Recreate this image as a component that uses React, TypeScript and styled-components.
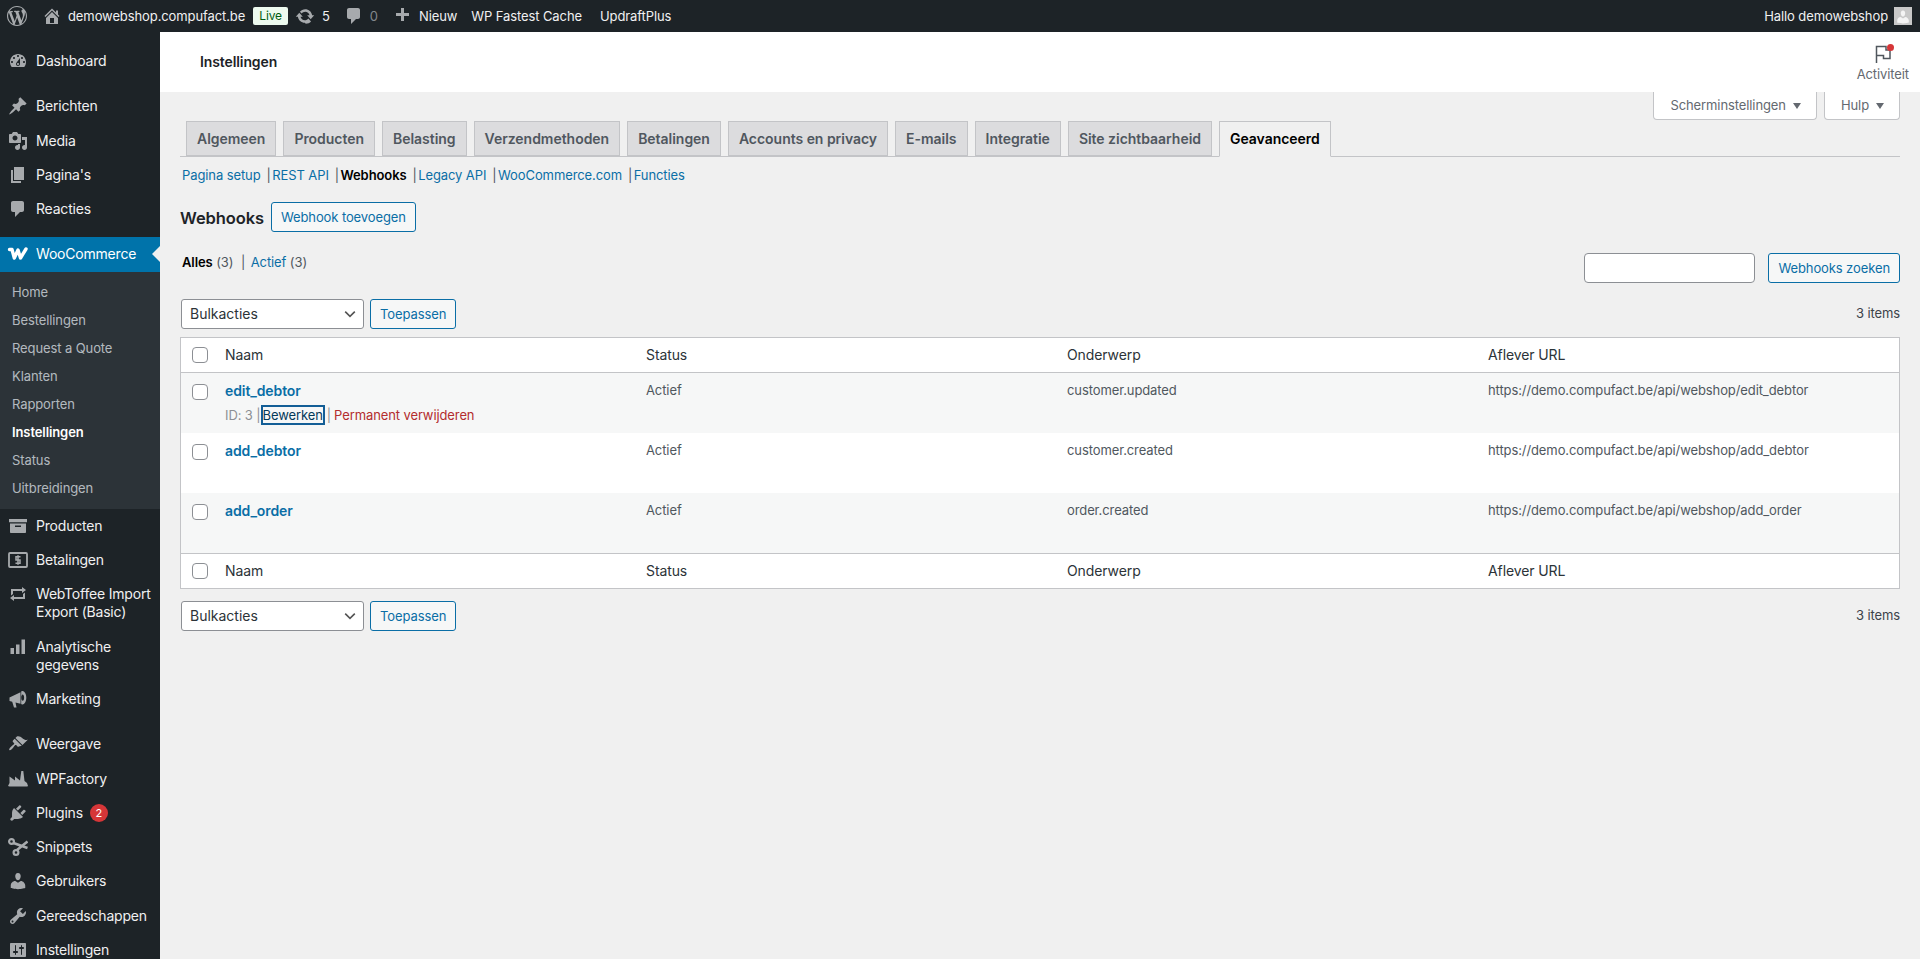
import React from 'react'
import styled, { createGlobalStyle } from 'styled-components'

const ICONS: Record<string, string> = {
  wp: 'M20 10c0-5.51-4.49-10-10-10C4.48 0 0 4.49 0 10c0 5.52 4.48 10 10 10 5.51 0 10-4.48 10-10zM7.78 15.37L4.37 6.22c.55-.02 1.17-.08 1.17-.08.5-.06.44-1.13-.06-1.11 0 0-1.45.11-2.37.11-.18 0-.37 0-.58-.01C4.12 2.69 6.87 1.07 10 1.07c2.33 0 4.45.87 6.05 2.34-.68-.11-1.65.39-1.65 1.58 0 .74.45 1.36.9 2.1.35.61.55 1.36.55 2.46 0 1.49-1.4 5-1.4 5l-3.03-8.37c.54-.02.82-.17.82-.17.5-.05.44-1.25-.06-1.22 0 0-1.44.12-2.38.12-.87 0-2.33-.12-2.33-.12-.5-.03-.56 1.2-.06 1.22l.92.08 1.26 3.41zM17.41 10c.24-.64.74-1.87.43-4.25.7 1.29 1.05 2.71 1.05 4.25 0 3.29-1.73 6.24-4.4 7.78.97-2.59 1.94-5.2 2.92-7.78zM6.1 18.09C3.12 16.65 1.11 13.53 1.11 10c0-1.3.23-2.48.72-3.58C3.25 10.3 4.67 14.19 6.1 18.09zm4.03-6.63l2.58 6.98c-.86.29-1.76.45-2.71.45-.79 0-1.57-.11-2.29-.33.81-2.38 1.62-4.74 2.42-7.1z',
  home: 'M16 8.5l1.53 1.53-1.06 1.06L10 4.62l-6.47 6.47-1.06-1.06L10 2.5l4 4v-2h2v4zm-6-2.46l6 5.99V18H4v-5.97zM12 17v-5H8v5h4z',
  update: 'M10.2 3.28c3.53 0 6.43 2.61 6.92 6h2.08l-3.5 4-3.5-4h2.32c-.45-1.97-2.21-3.45-4.32-3.45-1.45 0-2.73.71-3.54 1.78L4.95 5.66C6.23 4.2 8.11 3.28 10.2 3.28zm-.4 13.44c-3.52 0-6.43-2.61-6.92-6H.8l3.5-4c1.17 1.33 2.33 2.67 3.5 4H5.48c.45 1.97 2.21 3.45 4.32 3.45 1.45 0 2.73-.71 3.54-1.78l2.71 3.06c-1.28 1.46-3.16 2.27-5.25 2.27z',
  comment: 'M5 2h9c1.1 0 2 .9 2 2v7c0 1.1-.9 2-2 2h-2l-5 5v-5H5c-1.1 0-2-.9-2-2V4c0-1.1.9-2 2-2z',
  plus: 'M17 7v3h-5v5H9v-5H4V7h5V2h3v5h5z',
  dashboard: 'M3.76 16h12.48c1.1-1.37 1.76-3.11 1.76-5 0-4.42-3.58-8-8-8s-8 3.58-8 8c0 1.89.66 3.63 1.76 5zM10 4c.55 0 1 .45 1 1s-.45 1-1 1-1-.45-1-1 .45-1 1-1zM6 6c.55 0 1 .45 1 1s-.45 1-1 1-1-.45-1-1 .45-1 1-1zm8 0c.55 0 1 .45 1 1s-.45 1-1 1-1-.45-1-1 .45-1 1-1zm-5.37 5.55L12 7v6c0 1.1-.9 2-2 2s-2-.9-2-2c0-.57.24-1.08.63-1.45zM4 10c.55 0 1 .45 1 1s-.45 1-1 1-1-.45-1-1 .45-1 1-1zm12 0c.55 0 1 .45 1 1s-.45 1-1 1-1-.45-1-1 .45-1 1-1zm-5 3c0-.55-.45-1-1-1s-1 .45-1 1 .45 1 1 1 1-.45 1-1z',
  pin: 'M10.44 3.02l1.82-1.82 6.36 6.35-1.83 1.82c-1.05-.68-2.48-.57-3.41.36l-.75.75c-.92.93-1.04 2.35-.35 3.41l-1.83 1.82-2.41-2.41-2.8 2.79c-.42.42-3.38 2.71-3.8 2.29s1.86-3.39 2.28-3.81l2.79-2.79L4.1 9.36l1.83-1.82c1.05.69 2.48.57 3.4-.36l.75-.75c.93-.92 1.05-2.35.36-3.41z',
  media: 'M13 11V4c0-.55-.45-1-1-1h-1.67L9 1H5L3.67 3H2c-.55 0-1 .45-1 1v7c0 .55.45 1 1 1h10c.55 0 1-.45 1-1zM7 4.5c1.38 0 2.5 1.12 2.5 2.5S8.38 9.5 7 9.5 4.5 8.38 4.5 7 5.62 4.5 7 4.5zM14 6h5v10.5c0 1.38-1.12 2.5-2.5 2.5S14 17.88 14 16.5s1.12-2.5 2.5-2.5c.17 0 .34.02.5.05V9h-3V6zm-4 8.05V13h2v3.5c0 1.38-1.12 2.5-2.5 2.5S7 17.88 7 16.5 8.12 14 9.5 14c.17 0 .34.02.5.05z',
  page: 'M6 15V2h10v13H6zm-1 1h8v2H3V5h2v11z',
  archive: 'M19 3v3.2H1V3h18zM2 7.5h16V16c0 .55-.45 1-1 1H3c-.55 0-1-.45-1-1V7.5zm11 2H7V11h6V9.5z',
  repeat: 'M5 7v3l-2 1.5V5h11V3l4 3.01L14 9V7H5zm10 6v-3l2-1.5V15H6v2l-4-3.01L6 11v2h9z',
  bars: 'M2.5 11H6v6H2.5v-6zM8 7.5h3.5V17H8V7.5zM13.5 2.5H17V17h-3.5V2.5z',
  megaphone: 'M1.5 8.5l11-5.3v11.5l-5-1.3 1 5H6l-1.8-5.6-2.7-.8V8.5zM14.5 2c2 0 3.8 3 3.8 6.7s-1.8 6.7-3.8 6.7c-.8 0-1.3-.5-1.3-.5V2.5s.5-.5 1.3-.5zm.2 3.6c-.8 0-1.3 1.3-1.3 3.1s.5 3.1 1.3 3.1 1.4-1.3 1.4-3.1-.6-3.1-1.4-3.1z',
  brush: 'M14.48 11.06L7.41 3.99l1.5-1.5c.5-.56 2.3-.47 3.51.32 1.21.8 1.43 1.28 2.91 2.1 1.18.64 2.45 1.26 4.45.85zm-.71.71L6.7 4.7 4.93 6.47c-.39.39-.39 1.02 0 1.41l1.06 1.06c.39.39.39 1.03 0 1.42-.6.6-1.43 1.11-2.21 1.69-.35.26-.7.53-1.01.84-1.06 1.06-2.2 2.3-1.41 3.11.79.78 2.02-.36 3.1-1.43.3-.31.58-.66.84-1.01.58-.78 1.09-1.61 1.69-2.21.39-.39 1.03-.39 1.42 0l1.06 1.06c.39.39 1.02.39 1.41 0z',
  factory: 'M0 17l1.5-3V7.5l5.5 4v-4l5 4L13.3 2h2l1.2 10 2.5 2 1 3c-.5.5-1 .5-1.5.5h-17C1 17.5.4 17.3 0 17z',
  plug: 'M13.11 4.36L9.87 7.6 8 5.73l3.24-3.24c.35-.34 1.05-.2 1.56.32.52.51.66 1.21.31 1.55zm-8 1.77l.91-1.12 9.01 9.01-1.19.84c-.71.71-2.63 1.16-3.82 1.16H6.14L4.9 17.26c-.59.59-1.54.59-2.12 0-.59-.58-.59-1.53 0-2.12l1.24-1.24v-3.88c0-1.13.4-3.19 1.09-3.89zm7.26 3.97l3.24-3.24c.34-.35 1.04-.21 1.55.31.52.51.66 1.21.31 1.55l-3.24 3.25z',
  users: 'M10 9.25c-2.27 0-2.73-3.44-2.73-3.44C7 4.02 7.82 2 9.97 2c2.16 0 2.98 2.02 2.71 3.81 0 0-.41 3.44-2.68 3.44zm0 2.57L12.72 10c2.39 0 4.52 2.33 4.52 4.53v2.49s-3.65 1.13-7.24 1.13c-3.65 0-7.24-1.13-7.24-1.13v-2.49c0-2.25 1.94-4.48 4.47-4.48z',
  tools: 'M16.68 9.77c-1.34 1.34-3.3 1.67-4.95.99l-5.41 6.52c-.99.99-2.59.99-3.58 0s-.99-2.59 0-3.57l6.52-5.42c-.68-1.65-.35-3.61.99-4.95 1.28-1.28 3.12-1.62 4.72-1.06l-2.89 2.89 2.82 2.82 2.86-2.87c.53 1.58.18 3.39-1.08 4.65zM3.81 16.21c.4.39 1.04.39 1.43 0 .4-.4.4-1.04 0-1.43-.39-.4-1.03-.4-1.43 0-.39.39-.39 1.03 0 1.43z',
  settings: 'M18 16V4c0-.55-.45-1-1-1H3c-.55 0-1 .45-1 1v12c0 .55.45 1 1 1h14c.55 0 1-.45 1-1zM8 11h1c.55 0 1 .45 1 1s-.45 1-1 1H8v1.5c0 .28-.22.5-.5.5s-.5-.22-.5-.5V13H6c-.55 0-1-.45-1-1s.45-1 1-1h1V5.5c0-.28.22-.5.5-.5s.5.22.5.5V11zm5-2h-1c-.55 0-1-.45-1-1s.45-1 1-1h1V5.5c0-.28.22-.5.5-.5s.5.22.5.5V7h1c.55 0 1 .45 1 1s-.45 1-1 1h-1v5.5c0 .28-.22.5-.5.5s-.5-.22-.5-.5V9z',
}

const Icon = ({ name, size = 20 }: { name: string; size?: number }) => {
  if (name === 'woo') {
    return (
      <svg width={22} height={14} viewBox="0 0 22 14" fill="none" stroke="#fff" strokeWidth="3.4" strokeLinejoin="round" strokeLinecap="round">
        <path d="M2.5 2.5H5L7.3 11 11 3l2.5 8L19 2" />
      </svg>
    )
  }
  if (name === 'money') {
    return (
      <svg width={size} height={size} viewBox="0 0 20 20" fill="none">
        <rect x="1" y="3" width="18" height="14" rx="1" stroke="currentColor" strokeWidth="1.8" />
        <path d="M12.5 6.8H8V10h4v3.2H7.5M10 5.3v9.4" stroke="currentColor" strokeWidth="1.5" />
      </svg>
    )
  }
  if (name === 'scissors') {
    return (
      <svg width={size} height={size} viewBox="0 0 20 20" fill="none" stroke="currentColor">
        <circle cx="3.5" cy="4.5" r="2.4" strokeWidth="2.2" />
        <circle cx="8" cy="15.5" r="2.4" strokeWidth="2.2" />
        <path d="M5.5 6l14 5M9 13l10.5-8.5" strokeWidth="2.6" />
      </svg>
    )
  }
  return (
    <svg width={size} height={size} viewBox="0 0 20 20" fill="currentColor">
      <path d={ICONS[name]} />
    </svg>
  )
}

const GlobalStyle = createGlobalStyle`
  html, body {
    margin: 0;
    height: 100%;
    background: #f0f0f0;
    font-family: Inter, "Liberation Sans", sans-serif;
    font-size: 13px;
    line-height: 1.4;
    letter-spacing: -0.1px;
    color: #3c434a;
  }
  * {
    box-sizing: border-box;
  }
`

const Page = styled.div`
  height: 100vh;
  overflow: hidden;
  display: flex;
  flex-direction: column;
`

const AdminBar = styled.div`
  height: 32px;
  flex: none;
  background: #1d2327;
  color: #f0f0f1;
  display: flex;
  align-items: center;
  justify-content: space-between;
  padding: 0 8px 0 7px;
`

const BarGroup = styled.div`
  display: flex;
  align-items: center;
`

const BarIcon = styled.span<{ $left?: number }>`
  display: flex;
  color: #a7aaad;
  margin-left: ${({ $left }) => $left ?? 0}px;
`

const BarText = styled.span<{ $left?: number; $dim?: boolean }>`
  margin-left: ${({ $left }) => $left ?? 0}px;
  color: ${({ $dim }) => ($dim ? '#82878c' : '#f0f0f1')};
  white-space: nowrap;
`

const LiveBadge = styled.span`
  margin-left: 8px;
  height: 18px;
  padding: 0 6px;
  background: #edfaef;
  color: #005c12;
  border-radius: 2px;
  font-size: 12px;
  line-height: 18px;
`

const Avatar = styled.span`
  width: 18px;
  height: 18px;
  margin-left: 6px;
  background: #c8c8c8;
  display: flex;
  align-items: flex-end;
  justify-content: center;
  overflow: hidden;
  color: #f4f4f4;
`

const Body = styled.div`
  flex: 1;
  display: flex;
  min-height: 0;
`

const Sidebar = styled.nav`
  width: 160px;
  flex: none;
  background: #1d2327;
  padding-top: 12px;
`

const MenuRow = styled.div<{ $active?: boolean; $gap?: boolean }>`
  position: relative;
  display: flex;
  align-items: flex-start;
  padding: 8px 2px 8px 0;
  margin-top: ${({ $gap }) => ($gap ? 11 : 0)}px;
  line-height: 18.25px;
  font-size: 14px;
  letter-spacing: -0.2px;
  color: ${({ $active }) => ($active ? '#fff' : '#f0f0f1')};
  background: ${({ $active }) => ($active ? '#0073aa' : 'transparent')};

  ${({ $active }) =>
    $active &&
    `&::after {
      content: '';
      position: absolute;
      right: 0;
      top: 9px;
      border: 8px solid transparent;
      border-right-color: #f0f0f0;
      border-left: 0;
    }`}
`

const MenuIcon = styled.span<{ $active?: boolean }>`
  width: 36px;
  height: 18px;
  flex: none;
  display: flex;
  align-items: center;
  justify-content: center;
  color: ${({ $active }) => ($active ? '#fff' : '#a7aaad')};
`

const Badge = styled.span`
  display: inline-block;
  width: 18px;
  height: 18px;
  margin-left: 7px;
  border-radius: 50%;
  background: #d63638;
  color: #fff;
  text-align: center;
  font-size: 11px;
  line-height: 18px;
  vertical-align: top;
`

const SubMenu = styled.div`
  background: #2c3338;
  padding: 6px 0 7px;
`

const SubItem = styled.div<{ $current?: boolean }>`
  height: 28px;
  padding-left: 12px;
  line-height: 28px;
  font-size: 13px;
  color: ${({ $current }) => ($current ? '#fff' : 'rgba(240, 246, 252, 0.7)')};
  font-weight: ${({ $current }) => ($current ? 600 : 400)};
`

const Content = styled.main`
  flex: 1;
  min-width: 0;
`

const TopHeader = styled.header`
  height: 60px;
  background: #fff;
  display: flex;
  align-items: center;
  justify-content: space-between;
  padding: 0 11px 0 40px;
`

const HeaderTitle = styled.h1`
  margin: 0;
  font-size: 14px;
  font-weight: 600;
  color: #1d2327;
`

const Activity = styled.div`
  position: relative;
  display: flex;
  flex-direction: column;
  align-items: center;
  gap: 2px;
  padding-top: 2px;
  font-size: 13px;
  line-height: 16px;
  color: #646970;
`

const ActivityDot = styled.span`
  position: absolute;
  top: 2px;
  right: 15px;
  width: 7px;
  height: 7px;
  border-radius: 50%;
  background: #d63638;
`

const Wrap = styled.div`
  padding: 0 20px;
`

const ScreenMeta = styled.div`
  height: 28px;
  display: flex;
  justify-content: flex-end;
  gap: 7px;
`

const MetaTab = styled.div`
  height: 28px;
  padding: 0 15px 0 16px;
  background: #fff;
  border: 1px solid #c3c4c7;
  border-top: 0;
  border-radius: 0 0 4px 4px;
  display: flex;
  align-items: center;
  gap: 7px;
  color: #646970;
`

const MetaArrow = styled.span`
  width: 0;
  height: 0;
  border: 4px solid transparent;
  border-top: 6px solid #646970;
  border-bottom: 0;
`

const TabBar = styled.div`
  margin-top: 1px;
  height: 36px;
  border-bottom: 1px solid #c3c4c7;
  padding-left: 6px;
  display: flex;
  gap: 7px;
`

const Tab = styled.a<{ $active?: boolean }>`
  height: ${({ $active }) => ($active ? 36 : 35)}px;
  padding: 0 10px;
  border: 1px solid #c3c4c7;
  border-bottom-color: ${({ $active }) => ($active ? '#f0f0f0' : '#c3c4c7')};
  background: ${({ $active }) => ($active ? '#f0f0f0' : '#dcdcde')};
  color: ${({ $active }) => ($active ? '#000' : '#50575e')};
  font-size: 14px;
  font-weight: 600;
  line-height: 33px;
  letter-spacing: -0.03px;
  white-space: nowrap;
`

const SubLinks = styled.div`
  margin-top: 9px;
  height: 19px;
  padding-left: 2px;
  display: flex;
  line-height: 19px;
  color: #50575e;
`

const SubLink = styled.a<{ $current?: boolean }>`
  color: ${({ $current }) => ($current ? '#000' : '#0a6ea6')};
  font-weight: ${({ $current }) => ($current ? 600 : 400)};
`

const Sep = styled.span`
  margin: 0 1.5px 0 6px;
`

const TitleRow = styled.div`
  margin-top: 17px;
  display: flex;
  align-items: center;
  gap: 7px;
`

const Title = styled.h2`
  margin: 0;
  padding-top: 3px;
  font-size: 16.5px;
  font-weight: 600;
  color: #1d2327;
`

const Button = styled.a`
  height: 30px;
  padding: 0 9px;
  background: #f6f7f7;
  border: 1px solid #0a6ea6;
  border-radius: 3px;
  color: #0a6ea6;
  line-height: 28px;
  white-space: nowrap;
`

const FilterRow = styled.div`
  margin-top: 21px;
  display: flex;
  justify-content: space-between;
`

const Filters = styled.div`
  padding-left: 2px;
  line-height: 18px;
  color: #50575e;
`

const FilterCurrent = styled.strong`
  color: #000;
  font-weight: 600;
`

const FilterLink = styled.a`
  color: #0a6ea6;
`

const FilterSep = styled.span`
  margin: 0 2px 0 4px;
`

const SearchBox = styled.div`
  display: flex;
  gap: 13px;
`

const SearchInput = styled.input`
  width: 171px;
  height: 30px;
  padding: 0 8px;
  background: #fff;
  border: 1px solid #8c8f94;
  border-radius: 4px;
`

const TableNav = styled.div<{ $top?: boolean }>`
  margin: ${({ $top }) => ($top ? '16px 0 9px' : '12px 0 0')};
  height: 29px;
  padding-left: 1px;
  display: flex;
  align-items: center;
  gap: 6px;
`

const BulkSelect = styled.select`
  appearance: none;
  width: 183px;
  height: 30px;
  padding: 0 24px 0 8px;
  background: #fff url("data:image/svg+xml,%3Csvg xmlns='http://www.w3.org/2000/svg' width='20' height='20'%3E%3Cpath d='M4 7l6 6 6-6' fill='none' stroke='%23555' stroke-width='2'/%3E%3C/svg%3E") no-repeat right 5px top 55%;
  background-size: 16px 16px;
  border: 1px solid #8c8f94;
  border-radius: 3px;
  color: #2c3338;
  font-family: inherit;
  font-size: 14px;
`

const ItemCount = styled.span`
  margin-left: auto;
  color: #3c434a;
`

const Table = styled.table`
  width: 100%;
  table-layout: fixed;
  border-collapse: separate;
  border-spacing: 0;
  border: 1px solid #c3c4c7;
  background: #fff;
`

const CheckCol = styled.col`
  width: 34px;
`

const HeadCell = styled.th<{ $foot?: boolean }>`
  height: 35px;
  padding: 0 10px;
  text-align: left;
  font-size: 14px;
  font-weight: 400;
  color: #2c3338;
  border-${({ $foot }) => ($foot ? 'top' : 'bottom')}: 1px solid #c3c4c7;
`

const Row = styled.tr<{ $striped?: boolean }>`
  background: ${({ $striped }) => ($striped ? '#f6f7f7' : '#fff')};
`

const Cell = styled.td`
  height: 60px;
  padding: 8px 10px;
  vertical-align: top;
  color: #50575e;
  line-height: 19px;
`

const CheckCell = styled.td`
  padding: 11px 0 0 11px;
  vertical-align: top;
`

const HeadCheckCell = styled.th<{ $foot?: boolean }>`
  padding: 0 0 0 11px;
  text-align: left;
  border-${({ $foot }) => ($foot ? 'top' : 'bottom')}: 1px solid #c3c4c7;
`

const Checkbox = styled.input.attrs({ type: 'checkbox' })`
  appearance: none;
  display: block;
  margin: 0;
  width: 16px;
  height: 16px;
  background: #fff;
  border: 1px solid #8c8f94;
  border-radius: 4px;
`

const RowTitle = styled.a`
  display: block;
  font-size: 14px;
  font-weight: 600;
  line-height: 19px;
  color: #0a6ea6;
`

const RowActions = styled.div`
  margin-top: 5px;
  display: flex;
  align-items: center;
  height: 20px;
  color: #8c8f94;
  white-space: pre;
`

const FocusedAction = styled.a`
  margin: 0 2px 0 0;
  height: 20px;
  line-height: 16px;
  border: 2px solid #135e96;
  color: #043959;
`

const DangerAction = styled.a`
  color: #b32d2e;
  margin-left: 3px;
`

const Flag = () => (
  <svg width="20" height="20" viewBox="0 0 20 20" fill="none" stroke="#50575e" strokeWidth="1.5">
    <path d="M3.5 19V2.5H13V6h4v8.5h-6.5v-3h-7" />
  </svg>
)

const mainMenu = [
  { icon: 'pin', label: 'Berichten', gap: true },
  { icon: 'media', label: 'Media' },
  { icon: 'page', label: "Pagina's" },
  { icon: 'comment', label: 'Reacties' },
]

const wooItems = ['Home', 'Bestellingen', 'Request a Quote', 'Klanten', 'Rapporten', 'Instellingen', 'Status', 'Uitbreidingen']

const afterWoo = [
  { icon: 'archive', label: 'Producten' },
  { icon: 'money', label: 'Betalingen' },
  { icon: 'repeat', label: 'WebToffee Import Export (Basic)' },
  { icon: 'bars', label: 'Analytische gegevens' },
  { icon: 'megaphone', label: 'Marketing' },
  { icon: 'brush', label: 'Weergave', gap: true },
  { icon: 'factory', label: 'WPFactory' },
  { icon: 'plug', label: 'Plugins', badge: 2 },
  { icon: 'scissors', label: 'Snippets' },
  { icon: 'users', label: 'Gebruikers' },
  { icon: 'tools', label: 'Gereedschappen' },
  { icon: 'settings', label: 'Instellingen' },
]

const tabs = ['Algemeen', 'Producten', 'Belasting', 'Verzendmethoden', 'Betalingen', 'Accounts en privacy', 'E-mails', 'Integratie', 'Site zichtbaarheid', 'Geavanceerd']

const subLinks = ['Pagina setup', 'REST API', 'Webhooks', 'Legacy API', 'WooCommerce.com', 'Functies']

const columns = ['Naam', 'Status', 'Onderwerp', 'Aflever URL']

const webhooks = [
  { name: 'edit_debtor', topic: 'customer.updated', url: 'https://demo.compufact.be/api/webshop/edit_debtor', actions: true },
  { name: 'add_debtor', topic: 'customer.created', url: 'https://demo.compufact.be/api/webshop/add_debtor' },
  { name: 'add_order', topic: 'order.created', url: 'https://demo.compufact.be/api/webshop/add_order' },
]

const HeadRow = ({ foot }: { foot?: boolean }) => (
  <tr>
    <HeadCheckCell $foot={foot}>
      <Checkbox />
    </HeadCheckCell>
    {columns.map((col) => (
      <HeadCell key={col} $foot={foot}>{col}</HeadCell>
    ))}
  </tr>
)

const Bulk = ({ top }: { top?: boolean }) => (
  <TableNav $top={top}>
    <BulkSelect defaultValue="bulk">
      <option value="bulk">Bulkacties</option>
    </BulkSelect>
    <Button>Toepassen</Button>
    <ItemCount>3 items</ItemCount>
  </TableNav>
)

const App = () => {
  return (
    <Page>
      <GlobalStyle />
      <AdminBar>
        <BarGroup>
          <BarIcon><Icon name="wp" /></BarIcon>
          <BarIcon $left={15}><Icon name="home" /></BarIcon>
          <BarText $left={6}>demowebshop.compufact.be</BarText>
          <LiveBadge>Live</LiveBadge>
          <BarIcon $left={7}><Icon name="update" /></BarIcon>
          <BarText $left={7}>5</BarText>
          <BarIcon $left={14}><Icon name="comment" /></BarIcon>
          <BarText $left={6} $dim>0</BarText>
          <BarIcon $left={14}><Icon name="plus" /></BarIcon>
          <BarText $left={7}>Nieuw</BarText>
          <BarText $left={14}>WP Fastest Cache</BarText>
          <BarText $left={18}>UpdraftPlus</BarText>
        </BarGroup>
        <BarGroup>
          <BarText>Hallo demowebshop</BarText>
          <Avatar><Icon name="users" size={16} /></Avatar>
        </BarGroup>
      </AdminBar>
      <Body>
        <Sidebar>
          <MenuRow>
            <MenuIcon><Icon name="dashboard" /></MenuIcon>
            <span>Dashboard</span>
          </MenuRow>
          {mainMenu.map((item) => (
            <MenuRow key={item.label} $gap={item.gap}>
              <MenuIcon><Icon name={item.icon} /></MenuIcon>
              <span>{item.label}</span>
            </MenuRow>
          ))}
          <MenuRow $active $gap>
            <MenuIcon $active><Icon name="woo" /></MenuIcon>
            <span>WooCommerce</span>
          </MenuRow>
          <SubMenu>
            {wooItems.map((item) => (
              <SubItem key={item} $current={item === 'Instellingen'}>{item}</SubItem>
            ))}
          </SubMenu>
          {afterWoo.map((item) => (
            <MenuRow key={item.label} $gap={item.gap}>
              <MenuIcon><Icon name={item.icon} /></MenuIcon>
              <span>
                {item.label}
                {item.badge && <Badge>{item.badge}</Badge>}
              </span>
            </MenuRow>
          ))}
        </Sidebar>
        <Content>
          <TopHeader>
            <HeaderTitle>Instellingen</HeaderTitle>
            <Activity>
              <Flag />
              <ActivityDot />
              <span>Activiteit</span>
            </Activity>
          </TopHeader>
          <Wrap>
            <ScreenMeta>
              <MetaTab>Scherminstellingen <MetaArrow /></MetaTab>
              <MetaTab>Hulp <MetaArrow /></MetaTab>
            </ScreenMeta>
            <TabBar>
              {tabs.map((tab) => (
                <Tab key={tab} $active={tab === 'Geavanceerd'}>{tab}</Tab>
              ))}
            </TabBar>
            <SubLinks>
              {subLinks.map((link, idx) => (
                <React.Fragment key={link}>
                  {idx > 0 && <Sep>|</Sep>}
                  <SubLink $current={link === 'Webhooks'}>{link}</SubLink>
                </React.Fragment>
              ))}
            </SubLinks>
            <TitleRow>
              <Title>Webhooks</Title>
              <Button>Webhook toevoegen</Button>
            </TitleRow>
            <FilterRow>
              <Filters>
                <FilterCurrent>Alles</FilterCurrent> (3)<FilterSep> | </FilterSep><FilterLink>Actief</FilterLink> (3)
              </Filters>
              <SearchBox>
                <SearchInput />
                <Button>Webhooks zoeken</Button>
              </SearchBox>
            </FilterRow>
            <Bulk top />
            <Table>
              <colgroup>
                <CheckCol />
              </colgroup>
              <thead>
                <HeadRow />
              </thead>
              <tbody>
                {webhooks.map((hook, idx) => (
                  <Row key={hook.name} $striped={idx % 2 === 0}>
                    <CheckCell><Checkbox /></CheckCell>
                    <Cell>
                      <RowTitle>{hook.name}</RowTitle>
                      {hook.actions && (
                        <RowActions>
                          ID: 3 |<FocusedAction>Bewerken</FocusedAction>|<DangerAction>Permanent verwijderen</DangerAction>
                        </RowActions>
                      )}
                    </Cell>
                    <Cell>Actief</Cell>
                    <Cell>{hook.topic}</Cell>
                    <Cell>{hook.url}</Cell>
                  </Row>
                ))}
              </tbody>
              <tfoot>
                <HeadRow foot />
              </tfoot>
            </Table>
            <Bulk />
          </Wrap>
        </Content>
      </Body>
    </Page>
  )
}

export default App
